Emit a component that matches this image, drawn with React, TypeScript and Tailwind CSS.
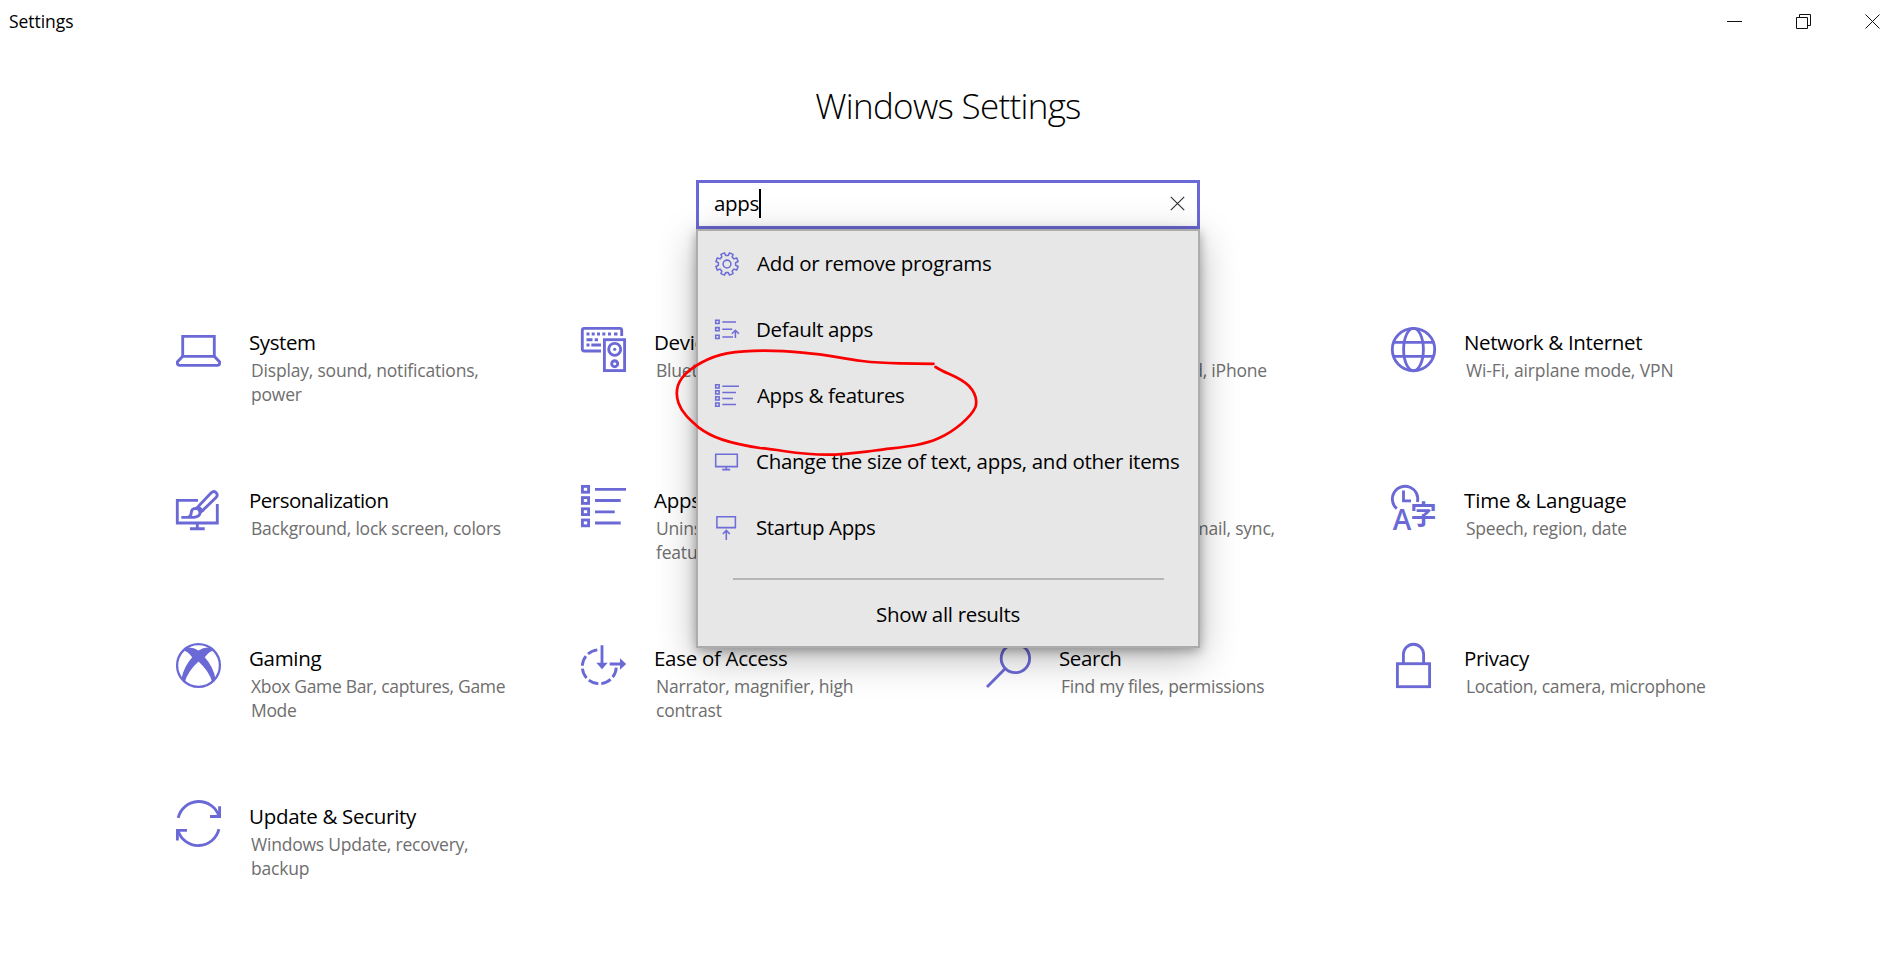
import React from "react";

const ACCENT = "#6b69d6";

function Icon({ children }: { children?: React.ReactNode }) {
  return (
    <svg
      width="45"
      height="45"
      viewBox="0 0 45 45"
      fill="none"
      stroke={ACCENT}
      strokeWidth="2.85"
      className="block shrink-0 overflow-visible"
    >
      {children}
    </svg>
  );
}

function SystemIcon() {
  return (
    <Icon>
      <path d="M6.7 29.3V9.3H38.3V29.3Z" />
      <path d="M6.7 29.3L1.4 34.9V36Q1.4 38.4 3.8 38.4H41.2Q43.6 38.4 43.6 36V34.9L38.3 29.3" />
    </Icon>
  );
}

function DevicesIcon() {
  return (
    <Icon>
      <path d="M20 24H3.3Q1.3 24 1.3 22V3.3Q1.3 1.3 3.3 1.3H38.7Q40.7 1.3 40.7 3.3V9" />
      <path d="M5.5 7H8.5M10.7 7H13.7M16 7H19M21.3 7H24.3M27 7H30M33 7H36.5M5.5 12.7H11.5M13.7 12.7H17M5.5 18H8.5M10.3 18H20" />
      <rect x="23.4" y="12.7" width="20.2" height="30.9" />
      <circle cx="33.7" cy="22.3" r="6" />
      <circle cx="33.7" cy="22.3" r="1.6" fill={ACCENT} stroke="none" />
      <circle cx="33.7" cy="36.7" r="3" />
    </Icon>
  );
}

function NetworkIcon() {
  return (
    <Icon>
      <circle cx="22.5" cy="22.5" r="21.2" />
      <ellipse cx="22.5" cy="22.5" rx="9.9" ry="21.2" />
      <path d="M3 15.4H42M3 29.4H42" />
    </Icon>
  );
}

function PersonalizationIcon() {
  return (
    <Icon>
      <path d="M22 15.3H1.3V38H41.3V19" />
      <path d="M21.3 38V44M14 43.7H28.7" />
      <path d="M22.2 21.5L35.2 7.8Q38 5.4 40.3 7.8Q42.3 10.3 39.8 12.8L26.3 25.8" />
      <path d="M22.2 21.5L26.3 25.8L23.6 28M22.2 21.5L20.2 24" />
      <path d="M5.3 32.3H18Q24 31.5 24 27.7Q23.6 23.4 19.5 23.3Q15.5 23.6 15.3 27.5Q15.2 31 12 32.3" />
    </Icon>
  );
}

function AppsIcon() {
  return (
    <Icon>
      <rect x="1.4" y="1.4" width="6.2" height="5.8" />
      <rect x="1.4" y="12.6" width="6.2" height="5.8" />
      <rect x="1.4" y="23.8" width="6.2" height="5.8" />
      <rect x="1.4" y="35" width="6.2" height="5.8" />
      <path d="M14 4.4H45M14 15.5H39.7M14 26.8H33.7M14 38H39.7" />
    </Icon>
  );
}

function TimeIcon() {
  return (
    <Icon>
      <path d="M5.8 23.6A12.7 12.7 0 1 1 26.4 17" />
      <path d="M12.5 5.5V15.8H20" />
      <text
        x="1.8"
        y="45"
        fontSize="28"
        fontWeight="600"
        fill={ACCENT}
        stroke="none"
        className="font-['Open_Sans',sans-serif]"
      >
        A
      </text>
      <text
        x="19.6"
        y="39.4"
        fontSize="26"
        fontWeight="700"
        fill={ACCENT}
        stroke="none"
        className="font-['Noto_Sans_CJK_JP',sans-serif]"
      >
        字
      </text>
    </Icon>
  );
}

function GamingIcon() {
  return (
    <Icon>
      <circle cx="22.5" cy="22.5" r="21.4" strokeWidth="2.3" />
      <path
        fill={ACCENT}
        stroke="none"
        d="M9 5Q16 3.2 22.5 7.5Q29 3.2 36 5L38.5 7.6Q33.5 8 28.8 14.2Q37.5 24 39.4 35.5L36.2 39.2Q33 28 22.5 18.6Q12 28 8.8 39.2L5.6 35.5Q7.5 24 16.2 14.2Q11.5 8 6.5 7.6Z"
      />
    </Icon>
  );
}

function EaseIcon() {
  return (
    <Icon>
      <circle cx="18.3" cy="23.7" r="17" strokeDasharray="10.3 3.05" pathLength="106.8" strokeDashoffset="-1" mask="url(#ease-gap)" />
      <mask id="ease-gap" maskUnits="userSpaceOnUse" x="-5" y="-5" width="55" height="55">
        <rect x="-5" y="-5" width="55" height="55" fill="white" stroke="none" />
        <path d="M17.4 23V-5H50V23Z" fill="black" stroke="none" />
      </mask>
      <path d="M21 2.3V21M28.7 21H40" />
      <path fill={ACCENT} stroke="none" d="M15.3 19.7H26.7L21 26.2ZM39 15.3V26.7L45.2 21Z" />
    </Icon>
  );
}

function SearchIcon() {
  return (
    <Icon>
      <circle cx="29.4" cy="15.4" r="14.2" />
      <path d="M19.3 25.5L1 44" />
    </Icon>
  );
}

function PrivacyIcon() {
  return (
    <Icon>
      <rect x="6.4" y="20.7" width="32.2" height="23" />
      <path d="M12.4 20V11.3A10 10 0 0 1 32.6 11.3V20" />
    </Icon>
  );
}

function UpdateIcon() {
  return (
    <Icon>
      <path d="M2.2 16.8A21.2 21.2 0 0 1 43 15.2M42.9 28.2A21.2 21.2 0 0 1 2 29.6" />
      <path d="M43.6 5.3V15.5H34M1.4 39.5V29.4H11" />
    </Icon>
  );
}

type Tile = {
  title: string;
  desc: string;
  icon: React.ReactNode;
  titleClass: string;
  descClass: string;
};

const tiles: Tile[] = [
  { title: "System", desc: "Display, sound, notifications, power", icon: <SystemIcon />, titleClass: "tracking-[-0.4px]", descClass: "tracking-[-0.19px]" },
  { title: "Devices", desc: "Bluetooth, printers, mouse", icon: <DevicesIcon />, titleClass: "tracking-[-0.3px]", descClass: "tracking-[-0.2px]" },
  { title: "Phone", desc: "Link your Android, iPhone", icon: <Icon />, titleClass: "tracking-[-0.3px]", descClass: "tracking-[-0.2px]" },
  { title: "Network & Internet", desc: "Wi-Fi, airplane mode, VPN", icon: <NetworkIcon />, titleClass: "tracking-[-0.33px]", descClass: "tracking-[-0.12px]" },
  { title: "Personalization", desc: "Background, lock screen, colors", icon: <PersonalizationIcon />, titleClass: "tracking-[-0.5px]", descClass: "tracking-[-0.22px]" },
  { title: "Apps", desc: "Uninstall, defaults, optional features", icon: <AppsIcon />, titleClass: "tracking-[-0.3px]", descClass: "tracking-[-0.2px]" },
  { title: "Accounts", desc: "Your accounts, email, sync, work, family", icon: <Icon />, titleClass: "tracking-[-0.3px]", descClass: "tracking-[-0.2px]" },
  { title: "Time & Language", desc: "Speech, region, date", icon: <TimeIcon />, titleClass: "tracking-[-0.15px]", descClass: "tracking-[-0.25px]" },
  { title: "Gaming", desc: "Xbox Game Bar, captures, Game Mode", icon: <GamingIcon />, titleClass: "tracking-[-0.3px]", descClass: "tracking-[-0.34px]" },
  { title: "Ease of Access", desc: "Narrator, magnifier, high contrast", icon: <EaseIcon />, titleClass: "tracking-[-0.3px]", descClass: "tracking-[-0.2px]" },
  { title: "Search", desc: "Find my files, permissions", icon: <SearchIcon />, titleClass: "tracking-[-0.4px]", descClass: "tracking-[-0.25px]" },
  { title: "Privacy", desc: "Location, camera, microphone", icon: <PrivacyIcon />, titleClass: "tracking-[-0.4px]", descClass: "tracking-[-0.3px]" },
  { title: "Update & Security", desc: "Windows Update, recovery, backup", icon: <UpdateIcon />, titleClass: "tracking-[-0.3px]", descClass: "tracking-[-0.22px]" },
];

function gearPath(): string {
  const teeth = 8;
  const c = 12;
  const pts: string[] = [];
  const profile: [number, number][] = [
    [-0.24, 8.7],
    [-0.17, 11.4],
    [0.17, 11.4],
    [0.24, 8.7],
  ];
  for (let i = 0; i < teeth; i++) {
    const mid = ((i + 0.5) * 2 * Math.PI) / teeth;
    for (const [offset, r] of profile) {
      const a = mid + offset;
      pts.push(`${(c + r * Math.cos(a)).toFixed(2)} ${(c + r * Math.sin(a)).toFixed(2)}`);
    }
  }
  return `M${pts.join("L")}Z`;
}

function SmallIcon({ children }: { children: React.ReactNode }) {
  return (
    <svg
      width="24"
      height="24"
      viewBox="0 0 24 24"
      fill="none"
      stroke="#6f6dd7"
      strokeWidth="1.55"
      className="block shrink-0 overflow-visible"
    >
      {children}
    </svg>
  );
}

const results = [
  {
    label: "Add or remove programs",
    labelClass: "tracking-[-0.28px]",
    icon: (
      <SmallIcon>
        <path d={gearPath()} strokeLinejoin="round" />
        <circle cx="12" cy="12" r="3.9" />
      </SmallIcon>
    ),
  },
  {
    label: "Default apps",
    labelClass: "-ml-px tracking-[-0.37px]",
    icon: (
      <SmallIcon>
        <path d="M.7 2.2H4.1V5.4H.7ZM.7 9.6H4.1V12.8H.7ZM.7 17.3H4.1V20.5H.7Z" />
        <path d="M7.3 3.9H21M7.3 11.2H17.3M7.3 19H18M20.4 20V12.4M16.9 15.8L20.4 12.3L23.9 15.8" />
      </SmallIcon>
    ),
  },
  {
    label: "Apps & features",
    labelClass: "tracking-[-0.35px]",
    icon: (
      <SmallIcon>
        <path d="M.7 .7H4.1V3.9H.7ZM.7 6.8H4.1V10H.7ZM.7 12.8H4.1V16H.7ZM.7 19H4.1V22.2H.7Z" />
        <path d="M7.3 2.3H24M7.3 8.4H21M7.3 14.4H18M7.3 20.5H21" />
      </SmallIcon>
    ),
  },
  {
    label: "Change the size of text, apps, and other items",
    labelClass: "-ml-px tracking-[-0.28px]",
    icon: (
      <SmallIcon>
        <path d="M.7 4.2H22.3V16.6H.7ZM11.3 16.6V19.5M7.2 19.6H15.2" />
      </SmallIcon>
    ),
  },
  {
    label: "Startup Apps",
    labelClass: "-ml-px tracking-[-0.37px]",
    icon: (
      <SmallIcon>
        <path d="M1.9 .8H20.4V11.6H1.9ZM11.3 24V14.4M7.8 18L11.3 14.4L14.8 18" />
      </SmallIcon>
    ),
  },
];

const windowControls = [
  "M0 7.5H15",
  "M.5 3.5H11.5V14.5H.5ZM3.5 3.5V.5H14.5V11.5H11.5",
  "M.5 .5L14.5 14.5M14.5 .5L.5 14.5",
];

function TitleBar() {
  return (
    <header className="flex h-[43px] items-center justify-between pl-[9px]">
      <span className="pb-[2px] text-[17.5px] leading-6 tracking-[-0.05px]">Settings</span>
      <div className="flex items-center gap-[54px] pr-[5px]">
        {windowControls.map((d) => (
          <svg key={d} width="15" height="15" viewBox="0 0 15 15" fill="none" stroke="#111" className="block">
            <path d={d} />
          </svg>
        ))}
      </div>
    </header>
  );
}

function SearchBox() {
  return (
    <div className="relative z-10 mt-[50px] w-[504px]">
      <div className="flex h-[49px] items-center justify-between border-[3px] border-[#6b69d6] bg-white pr-[12px] pb-[2px] pl-[15px]">
        <span className="flex items-center text-[20.5px] tracking-[-0.3px]">
          apps
          <span className="h-[29px] w-[2px] bg-black" />
        </span>
        <svg width="15" height="15" viewBox="0 0 15 15" stroke="#333" strokeWidth="1.2" className="block">
          <path d="M.8 .8L14.2 14.2M14.2 .8L.8 14.2" />
        </svg>
      </div>
      <div className="absolute top-[49px] left-0 flex h-[419px] w-[504px] flex-col border-2 border-[#acacac] bg-[#e7e7e7] shadow-[0_10px_36px_rgba(0,0,0,0.28),0_3px_10px_rgba(0,0,0,0.3)]">
        {results.map((r) => (
          <div key={r.label} className="flex h-[66px] shrink-0 items-center gap-[18px] pl-[17px]">
            {r.icon}
            <span className={`pb-[2px] text-[20.5px] whitespace-nowrap ${r.labelClass}`}>{r.label}</span>
          </div>
        ))}
        <div className="mr-[34px] ml-[35px] mt-[17px] h-[2px] shrink-0 bg-[#b6b6b6]" />
        <div className="flex flex-1 items-center justify-center pt-[2px] text-[20.5px] tracking-[-0.32px]">Show all results</div>
      </div>
      <svg
        width="304"
        height="110"
        viewBox="674 348 304 110"
        fill="none"
        stroke="#fb0000"
        strokeWidth="2.7"
        strokeLinecap="round"
        strokeLinejoin="round"
        className="absolute top-[168px] left-[-22px] overflow-visible"
      >
        <path d="M933.5 363.8L900 363.3Q878 363 862 361C840 358.5 828 354.5 805 352.8C780 350.5 750 349.5 727 353.4C710 356.5 690 367 682 378C676 386 675.5 394 678.5 403C682 413 690 420 698.5 427.3C712 437.5 728 443 760 448C785 450.5 800 454.7 827 454.7C845 454.7 855 453 875 450.5C900 447 920 446.5 938 438.5C955 431 971 417 975.5 407C977.5 400 975.5 393 969 386C959 376 947 374.5 935.5 367" />
      </svg>
    </div>
  );
}

export default function App() {
  return (
    <div className="h-[962px] overflow-hidden bg-white font-['Open_Sans',sans-serif] text-black">
      <TitleBar />
      <div className="flex flex-col items-center pl-[11px]">
        <h1 className="mt-[38px] text-[35px] leading-[49px] font-light tracking-[-0.7px]">Windows Settings</h1>
        <SearchBox />
      </div>
      <main className="mt-[98px] grid auto-rows-[158px] grid-cols-[repeat(4,405px)] pl-[176px]">
        {tiles.map((t) => (
          <div key={t.title} className="flex gap-[28px]">
            {t.icon}
            <div className="w-[260px]">
              <div className={`text-[20.5px] leading-[30px] ${t.titleClass}`}>{t.title}</div>
              <div className={`pt-px pl-[2px] text-[17.5px] leading-[24px] text-[#6e6e6e] ${t.descClass}`}>{t.desc}</div>
            </div>
          </div>
        ))}
      </main>
    </div>
  );
}
